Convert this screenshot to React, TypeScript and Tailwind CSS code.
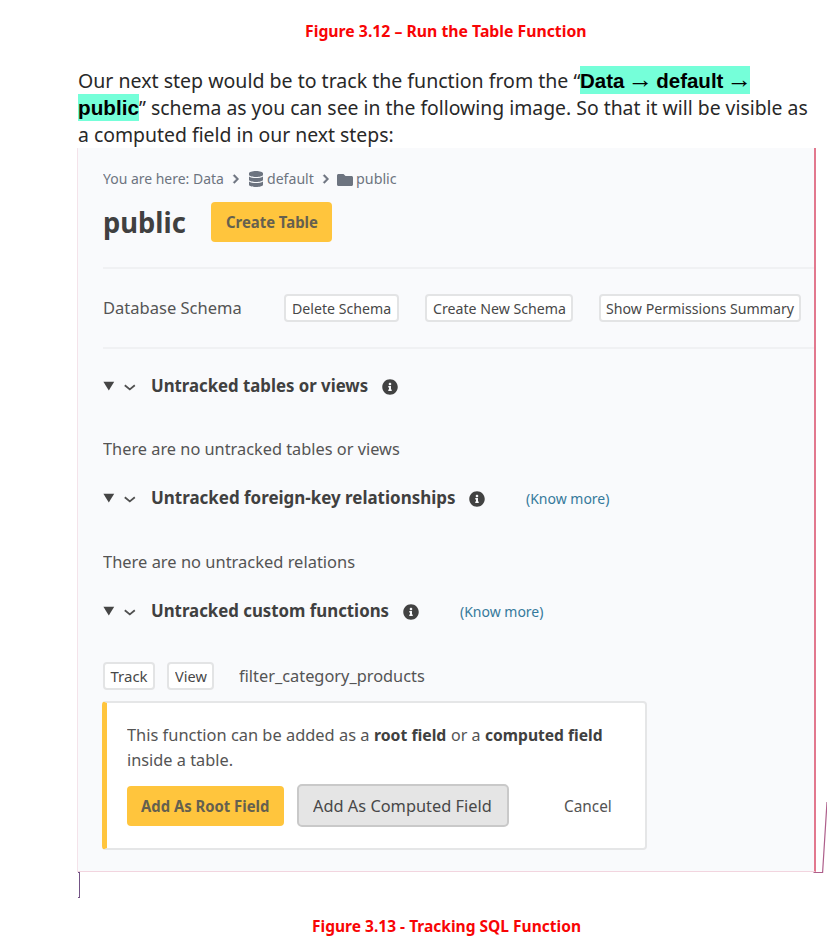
import { useLayoutEffect, useRef, useState } from "react";
import type { ReactNode } from "react";
import { FaChevronRight, FaDatabase, FaFolder, FaInfoCircle } from "react-icons/fa";

/* One line of type, condensed or widened to fill the width of its box. */
function Line({ className, children }: { className: string; children: ReactNode }) {
  const box = useRef<HTMLSpanElement>(null);
  const text = useRef<HTMLSpanElement>(null);
  const [ratio, setRatio] = useState(1);
  useLayoutEffect(() => {
    if (box.current && text.current && text.current.offsetWidth) {
      const css = getComputedStyle(box.current);
      const room = box.current.clientWidth - parseFloat(css.paddingLeft) - parseFloat(css.paddingRight);
      setRatio(room / text.current.offsetWidth);
    }
  }, []);
  return (
    <span ref={box} className={`block shrink-0 whitespace-nowrap ${className}`}>
      <span ref={text} className="inline-block origin-left whitespace-pre" style={{ transform: `scaleX(${ratio})` }}>
        {children}
      </span>
    </span>
  );
}

function Arrow() {
  return <span className="-mx-[2.5px] font-['Liberation_Serif',serif] text-[25px] leading-none font-normal">→</span>;
}

function SmallButton({ className, text, children }: { className: string; text: string; children: ReactNode }) {
  return (
    <button className={`flex h-7 shrink-0 items-center justify-center rounded-[4px] border-2 border-[#e3e4e5] bg-white text-[15px] leading-5 text-[#484848] ${className}`}>
      <Line className={text}>{children}</Line>
    </button>
  );
}

function SectionHead({ width, title, more }: { width: string; title: string; more?: boolean }) {
  return (
    <div className="flex h-6 items-center">
      <svg className="mt-px mr-[9px] h-[10px] w-3 shrink-0" viewBox="0 0 12 10">
        <path d="M0.4 0.7H11.2L5.8 9.6Z" fill="#454545" />
      </svg>
      <svg className="mt-[5px] mr-[15px] h-[7px] w-3 shrink-0" viewBox="0 0 12 7">
        <path d="M0.8 1.2L5.8 5.4L10.8 1.2" fill="none" stroke="#505050" strokeWidth="1.8" />
      </svg>
      <Line className={`text-lg leading-6 font-bold text-[#404040] ${width}`}>{title}</Line>
      <FaInfoCircle className="mt-[3px] ml-[14px] size-4 shrink-0 text-[#424242]" />
      {more && (
        <Line className="mt-0.5 ml-[41px] w-[83px] text-[15px] leading-6 text-[#35799b]">(Know more)</Line>
      )}
    </div>
  );
}

export default function App() {
  return (
    <main className="relative h-[950px] w-[827px] overflow-hidden bg-white font-['Noto_Sans',sans-serif]">
      <div className="flex h-[67px] pt-[21px] pl-[305px]">
        <Line className="h-5 w-[282px] text-base leading-5 font-bold text-[#f80505]">Figure 3.12 – Run the Table Function</Line>
      </div>

      <div className="flex h-[81px] flex-col pl-[78px] text-xl leading-[27px] text-[#282828]">
        <div className="flex h-[27px]">
          <Line className="w-[502px]">Our next step would be to track the function from the “</Line>
          <Line className="-mt-px h-7 w-[170px] bg-[#75ffd9] pt-px font-['Liberation_Sans',sans-serif] font-bold text-black">
            Data <Arrow /> default <Arrow />
          </Line>
        </div>
        <div className="flex h-[27px]">
          <Line className="h-[27px] w-[61px] bg-[#75ffd9] pt-px font-['Liberation_Sans',sans-serif] font-bold text-black">public</Line>
          <Line className="w-[669px]">” schema as you can see in the following image. So that it will be visible as</Line>
        </div>
        <Line className="w-[316px]">a computed field in our next steps:</Line>
      </div>

      <section className="ml-[77px] flex h-[724px] w-[739px] flex-col border-r-2 border-b border-l border-r-[#e2788e] border-b-[#f2d5df] border-l-[#f4e3ea] bg-[#f9fafc] pl-[25px] text-[#545454]">
        <div className="mt-5 flex h-5 shrink-0 items-center text-[15px] leading-5 text-[#6d7480]">
          <Line className="w-[121px]">You are here: Data</Line>
          <FaChevronRight className="mt-0.5 ml-2 h-2.5 w-2 shrink-0" stroke="currentColor" strokeWidth="30" />
          <FaDatabase className="mt-0.5 ml-[9px] h-4 w-3.5 shrink-0" />
          <Line className="ml-1 w-[47px]">default</Line>
          <FaChevronRight className="mt-0.5 ml-2 h-2.5 w-2 shrink-0" stroke="currentColor" strokeWidth="30" />
          <FaFolder className="mt-[3px] ml-[7px] size-4 shrink-0" />
          <Line className="ml-[3px] w-[41px]">public</Line>
        </div>

        <div className="mt-[14px] flex h-10 shrink-0 items-center">
          <Line className="w-[83px] text-[28px] leading-10 font-bold text-[#404040]">public</Line>
          <button className="ml-[25px] flex h-10 w-[121px] items-center justify-center rounded-[4px] bg-[#ffc53d] pb-px">
            <Line className="w-[92px] text-base leading-6 font-bold text-[#65604f]">Create Table</Line>
          </button>
        </div>

        <hr className="mt-[25px] h-0.5 shrink-0 border-0 bg-[#f0f1f3]" />

        <div className="mt-[25px] flex h-7 shrink-0 items-center">
          <Line className="w-[139px] text-[17px] leading-7">Database Schema</Line>
          <SmallButton className="ml-[42px] w-[115px]" text="w-[99px]">Delete Schema</SmallButton>
          <SmallButton className="ml-[26px] w-[148px]" text="w-[133px]">Create New Schema</SmallButton>
          <SmallButton className="ml-[26px] w-[202px]" text="w-[188px]">Show Permissions Summary</SmallButton>
        </div>

        <hr className="mt-[25px] h-0.5 shrink-0 border-0 bg-[#f0f1f3]" />

        <div className="mt-6 shrink-0">
          <SectionHead width="w-[217px]" title="Untracked tables or views" />
        </div>
        <Line className="mt-10 h-6 w-[297px] text-base leading-6">There are no untracked tables or views</Line>
        <div className="mt-6 shrink-0">
          <SectionHead width="w-[304px]" title="Untracked foreign-key relationships" more />
        </div>
        <Line className="mt-[41px] h-6 w-[252px] text-base leading-6">There are no untracked relations</Line>
        <div className="mt-6 shrink-0">
          <SectionHead width="w-[238px]" title="Untracked custom functions" more />
        </div>

        <div className="mt-10 flex h-7 shrink-0 items-center">
          <SmallButton className="w-[52px]" text="w-[37px]">Track</SmallButton>
          <SmallButton className="ml-3 w-[47px]" text="w-[32px]">View</SmallButton>
          <Line className="ml-[25px] w-[186px] text-base leading-6">filter_category_products</Line>
        </div>

        <div className="mt-[11px] -ml-px flex h-[149px] w-[545px] shrink-0 flex-col rounded-[4px] border-2 border-l-[5px] border-[#e5e6e7] border-l-[#ffc53d] bg-white pl-5">
          <div className="mt-5 flex h-6 text-base leading-6">
            <Line className="w-[243px]">This function can be added as a</Line>
            <Line className="ml-1 w-[72px] font-bold text-[#404040]">root field</Line>
            <Line className="ml-[5px] w-[29px]">or a</Line>
            <Line className="ml-[5px] w-[118px] font-bold text-[#404040]">computed field</Line>
          </div>
          <Line className="mt-px h-6 w-[106px] text-base leading-6">inside a table.</Line>
          <div className="mt-3 flex h-[43px] items-center">
            <button className="flex h-10 w-[157px] items-center justify-center rounded-[4px] bg-[#ffc53d] pr-0.5">
              <Line className="w-[128px] text-base leading-6 font-bold text-[#65604f]">Add As Root Field</Line>
            </button>
            <button className="ml-[13px] flex h-[43px] w-[212px] items-center justify-center rounded-[5px] border-2 border-[#c9c9c9] bg-[#e5e5e5] pr-px">
              <Line className="w-[179px] text-[17px] leading-6 text-[#484848]">Add As Computed Field</Line>
            </button>
            <Line className="ml-[55px] w-[48px] text-base leading-6">Cancel</Line>
          </div>
        </div>
      </section>

      <div className="ml-[78px] h-[26px] w-0.5 border-y border-r border-[#735485]" />
      <div className="flex pt-[18px] pl-[312px]">
        <Line className="h-5 w-[269px] text-base leading-5 font-bold text-[#f80505]">Figure 3.13 - Tracking SQL Function</Line>
      </div>

      {/* Revision connector that runs off the right margin */}
      <svg className="absolute top-[800px] left-[813px] h-[74px] w-3.5" viewBox="0 0 14 74">
        <path d="M0.5 72.5H9.6L14 2" fill="none" stroke="#ae5f8b" strokeWidth="1.2" />
      </svg>
    </main>
  );
}
